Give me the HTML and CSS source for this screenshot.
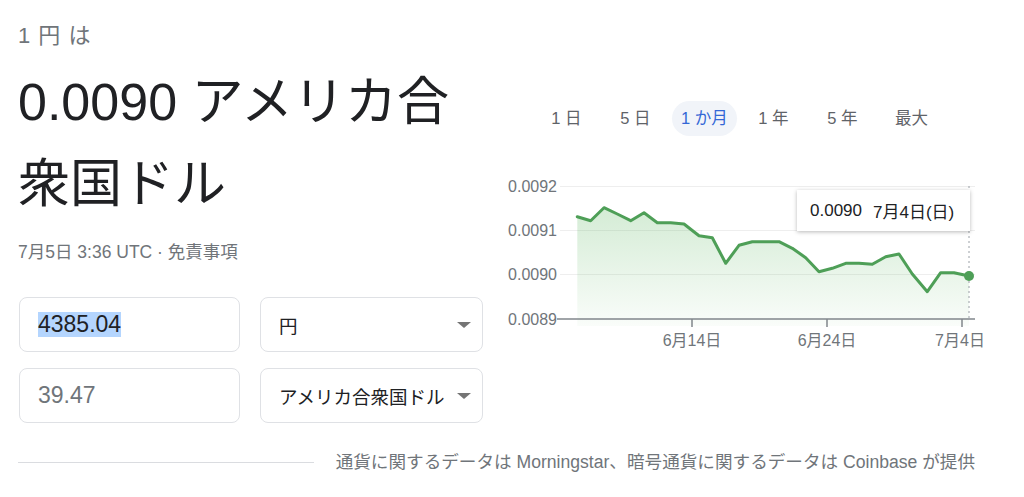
FILE: index.html
```html
<!DOCTYPE html>
<html lang="ja">
<head>
<meta charset="utf-8">
<title>通貨換算</title>
<link rel="stylesheet" href="styles.css">
</head>
<body>
<div class="page">
  <div class="main">
    <div class="left">
      <div class="header">1 円 は</div>
      <div class="big">0.0090 アメリカ合衆国ドル</div>
      <div class="date">7月5日 3:36 UTC · 免責事項</div>
      <div class="inputs">
        <div class="box field"><span class="sel">4385.04</span></div>
        <div class="box select"><span>円</span><span class="caret"></span></div>
        <div class="box field muted">39.47</div>
        <div class="box select"><span>アメリカ合衆国ドル</span><span class="caret"></span></div>
      </div>
    </div>
    <div class="right">
      <div class="tabs">
        <div class="tab">1 日</div>
        <div class="tab">5 日</div>
        <div class="tab active">1 か月</div>
        <div class="tab">1 年</div>
        <div class="tab">5 年</div>
        <div class="tab">最大</div>
      </div>
      <div class="chart">
        <svg class="plot" width="484" height="180" viewBox="500 170 484 180" xmlns="http://www.w3.org/2000/svg">
          <defs>
            <linearGradient id="g" x1="0" y1="0" x2="0" y2="1">
              <stop offset="0" stop-color="#4caf50" stop-opacity="0.24"/>
              <stop offset="1" stop-color="#4caf50" stop-opacity="0.03"/>
            </linearGradient>
          </defs>
          <g stroke="#eeeeee" stroke-width="1">
            <line x1="560" y1="186.5" x2="975" y2="186.5"/>
            <line x1="560" y1="230.5" x2="975" y2="230.5"/>
            <line x1="560" y1="274.5" x2="975" y2="274.5"/>
          </g>
          <path fill="url(#g)" d="M577.3,216.7 L590.7,220.7 L604,207.7 L617.3,214 L630.7,220.7 L644,212.7 L657.3,222.7 L670.7,222.7 L684,224 L699,235.7 L712.3,237.7 L725.7,263.3 L739,245.3 L752.3,241.7 L765.7,241.7 L779,241.7 L792.3,248.3 L805.7,257.7 L819,271.7 L832.3,268.3 L845.7,263.3 L859,263.3 L872.3,264.3 L885.7,256.7 L899,254 L912.3,274 L927.3,291.7 L940.7,272.7 L954,272.7 L969,276 L969,326 L577.3,326 Z"/>
          <line x1="969" y1="186" x2="969" y2="319" stroke="#9aa0a6" stroke-width="1" stroke-dasharray="2 3"/>
          <line x1="557" y1="319" x2="975" y2="319" stroke="#80868b" stroke-width="1.5"/>
          <g stroke="#80868b" stroke-width="1.5">
            <line x1="692" y1="319" x2="692" y2="327"/>
            <line x1="827" y1="319" x2="827" y2="327"/>
            <line x1="962" y1="319" x2="962" y2="327"/>
          </g>
          <path fill="none" stroke="#4e9f57" stroke-width="3" stroke-linejoin="round" stroke-linecap="round" d="M577.3,216.7 L590.7,220.7 L604,207.7 L617.3,214 L630.7,220.7 L644,212.7 L657.3,222.7 L670.7,222.7 L684,224 L699,235.7 L712.3,237.7 L725.7,263.3 L739,245.3 L752.3,241.7 L765.7,241.7 L779,241.7 L792.3,248.3 L805.7,257.7 L819,271.7 L832.3,268.3 L845.7,263.3 L859,263.3 L872.3,264.3 L885.7,256.7 L899,254 L912.3,274 L927.3,291.7 L940.7,272.7 L954,272.7 L969,276"/>
          <circle cx="969" cy="276" r="5" fill="#4e9f57"/>
          <g class="ylab" text-anchor="end">
            <text x="557" y="192">0.0092</text>
            <text x="557" y="236">0.0091</text>
            <text x="557" y="280">0.0090</text>
            <text x="557" y="324.5">0.0089</text>
          </g>
          <g class="xlab" text-anchor="middle">
            <text x="692" y="346">6月14日</text>
            <text x="827" y="346">6月24日</text>
            <text x="960" y="346">7月4日</text>
          </g>
        </svg>
        <div class="tooltip"><span>0.0090</span><span>7月4日(日)</span></div>
      </div>
    </div>
  </div>
  <div class="footer">
    <div class="rule"></div>
    <div class="credit">通貨に関するデータは Morningstar、暗号通貨に関するデータは Coinbase が提供</div>
  </div>
</div>
</body>
</html>
```
FILE: styles.css
```css
html, body {
  margin: 0;
  padding: 0;
  background: #ffffff;
}
body {
  font-family: "Liberation Sans", "Noto Sans CJK JP", sans-serif;
  color: #202124;
}
.page {
  padding: 0 40px 0 18px;
}
.main {
  display: flex;
}
.left {
  width: 465px;
  flex: none;
}
.header {
  margin-top: 22px;
  font-size: 22px;
  line-height: 28px;
  word-spacing: 2px;
  color: #70757a;
}
.big {
  margin-top: 11px;
  font-size: 52px;
  line-height: 82px;
  color: #202124;
}
.date {
  margin-top: 16px;
  font-size: 17.5px;
  line-height: 22px;
  color: #70757a;
}
.inputs {
  margin-top: 34px;
  margin-left: 1px;
  display: grid;
  grid-template-columns: 221px 223px;
  grid-template-rows: 55px 55px;
  column-gap: 20px;
  row-gap: 16px;
}
.box {
  box-sizing: border-box;
  border: 1px solid #dfe1e5;
  border-radius: 8px;
  display: flex;
  align-items: center;
  padding: 0 11px 0 18px;
}
.field {
  font-size: 23px;
  color: #202124;
}
.field.muted {
  color: #70757a;
}
.sel {
  background: #b4d5fe;
  line-height: 25px;
}
.select {
  justify-content: space-between;
  font-size: 18.5px;
  color: #202124;
}
.caret {
  width: 0;
  height: 0;
  border-left: 7px solid transparent;
  border-right: 7px solid transparent;
  border-top: 6px solid #757575;
}
.right {
  flex: 1;
}
.tabs {
  display: flex;
  gap: 4px;
  margin-top: 101px;
  padding-left: 51px;
}
.tab {
  width: 65px;
  height: 35px;
  line-height: 35px;
  text-align: center;
  border-radius: 18px;
  font-size: 16.5px;
  color: #5f6368;
}
.tab.active {
  background: #f1f4f9;
  color: #3367d6;
}
.chart {
  position: relative;
  margin-top: 34px;
  margin-left: 17px;
  width: 484px;
  height: 180px;
}
.plot {
  display: block;
}
.ylab text, .xlab text {
  font-family: "Liberation Sans", "Noto Sans CJK JP", sans-serif;
  font-size: 16px;
  fill: #70757a;
}
.tooltip {
  position: absolute;
  left: 297px;
  top: 20px;
  width: 173px;
  height: 41px;
  box-sizing: border-box;
  padding-left: 13px;
  display: flex;
  align-items: center;
  gap: 11px;
  background: #ffffff;
  box-shadow: 0 1px 4px rgba(0, 0, 0, 0.28);
  font-size: 17px;
  color: #202124;
}
.footer {
  display: flex;
  align-items: center;
  gap: 22px;
  margin-top: 27px;
  height: 24px;
}
.rule {
  flex: 1;
  height: 1px;
  background: #dadce0;
}
.credit {
  margin-right: 9px;
  font-size: 17.6px;
  line-height: 24px;
  color: #70757a;
  white-space: nowrap;
}
```
